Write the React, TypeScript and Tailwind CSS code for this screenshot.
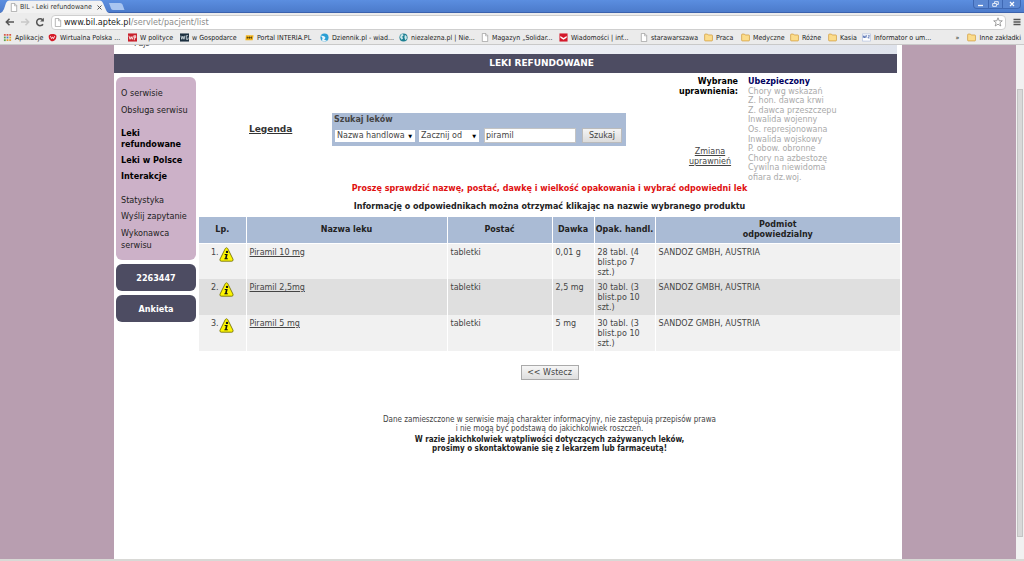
import React, { useState } from 'react'

const bookmarks = [
  { label: "Aplikacje", icon: "apps", width: "w-[45px]" },
  { label: "Wirtualna Polska ...", icon: "wp", width: "w-[80px]" },
  { label: "W polityce", icon: "polityce", width: "w-[52px]" },
  { label: "w Gospodarce", icon: "gospodarce", width: "w-[65px]" },
  { label: "Portal INTERIA.PL", icon: "interia", width: "w-[75px]" },
  { label: "Dziennik.pl - wiad...", icon: "dziennik", width: "w-[79px]" },
  { label: "niezalezna.pl | Nie...", icon: "globe", width: "w-[82px]" },
  { label: "Magazyn „Solidar...", icon: "page", width: "w-[78px]" },
  { label: "Wiadomości | inf...", icon: "mail", width: "w-[81px]" },
  { label: "starawarszawa", icon: "page", width: "w-[64px]" },
  { label: "Praca", icon: "folder", width: "w-[37px]" },
  { label: "Medyczne", icon: "folder", width: "w-[49px]" },
  { label: "Różne", icon: "folder", width: "w-[38px]" },
  { label: "Kasia", icon: "folder", width: "w-[34px]" },
  { label: "Informator o um...", icon: "nfz", width: "w-[72px]" },
]

const rights = [
  "Chory wg wskazań",
  "Z. hon. dawca krwi",
  "Z. dawca przeszczepu",
  "Inwalida wojenny",
  "Os. represjonowana",
  "Inwalida wojskowy",
  "P. obow. obronne",
  "Chory na azbestozę",
  "Cywilna niewidoma",
  "ofiara dz.woj.",
]

const drugs = [
  { name: "Piramil 10 mg", form: "tabletki", dose: "0,01 g", pack: "28 tabl. (4 blist.po 7 szt.)", company: "SANDOZ GMBH, AUSTRIA" },
  { name: "Piramil 2,5mg", form: "tabletki", dose: "2,5 mg", pack: "30 tabl. (3 blist.po 10 szt.)", company: "SANDOZ GMBH, AUSTRIA" },
  { name: "Piramil 5 mg", form: "tabletki", dose: "5 mg", pack: "30 tabl. (3 blist.po 10 szt.)", company: "SANDOZ GMBH, AUSTRIA" },
]

function PageIcon() {
  return (
    <svg viewBox="0 0 8 10" className="h-[9px] w-2 shrink-0">
      <path d="M1 .5h3.8L7 2.8v6.7H1z" fill="#fff" stroke="#9a9a9a" strokeWidth=".8" />
      <path d="M4.6.6v2.5H7" fill="none" stroke="#9a9a9a" strokeWidth=".7" />
    </svg>
  )
}

function BookmarkIcon({ name }: { name: string }) {
  if (name === "page") return <PageIcon />
  return (
    <svg viewBox="0 0 10 10" className="h-[9px] w-[9px] shrink-0">
      {name === "apps" && (
        <>
          <path d="M1 1h2v2H1zM4 1h2v2H4zM7 1h2v2H7z" fill="#d8574a" />
          <path d="M1 4h2v2H1z" fill="#5a9e4b" />
          <path d="M4 4h2v2H4z" fill="#4a7fd0" />
          <path d="M7 4h2v2H7z" fill="#e0b030" />
          <path d="M1 7h2v2H1z" fill="#5a9e4b" />
          <path d="M4 7h2v2H4zM7 7h2v2H7z" fill="#e0a030" />
        </>
      )}
      {name === "wp" && (
        <>
          <path d="M1 2.5Q2.500 1 5 1.200 8 .5 9.300 2.800 9.800 6 7.500 8 5 10.300 3 8.500 0 6.500 1 2.500z" fill="#d51c29" />
          <path d="M2.600 3.500l1.500 2.800 1-2 1 2 1.300-2.800" fill="none" stroke="#fff" strokeWidth=".9" />
        </>
      )}
      {name === "polityce" && (
        <>
          <path d="M0 .5h10v9H0z" fill="#c9202b" />
          <path d="M1 3l1.300 4L3.500 4l1.200 3L6 3M7 8V3h1.500v2.400H7" fill="none" stroke="#fff" strokeWidth=".9" />
        </>
      )}
      {name === "gospodarce" && (
        <>
          <path d="M0 .5h10v9H0z" fill="#1c3040" />
          <path d="M1 3l1 4 1.200-3.500L4.400 7l1-4M9 3H7v4h2V5" fill="none" stroke="#dfe9ee" strokeWidth=".9" />
        </>
      )}
      {name === "interia" && (
        <>
          <path d="M1 2.500h8.500L8.500 8H.5z" fill="#f3b51b" />
          <path d="M2 5.200h5.500M2.500 4v2.300M5 4v2.300M7.300 4v2.300" stroke="#3b3010" strokeWidth=".8" />
        </>
      )}
      {name === "dziennik" && (
        <>
          <circle cx="5" cy="5" r="4.500" fill="#2b9fd4" />
          <path d="M1 3Q5 2.500 6 5 6 7 4.500 7 6 9 8.500 7.500 5 11 2 8 4 6 1 3z" fill="#e9f5fb" />
        </>
      )}
      {name === "globe" && (
        <>
          <circle cx="5" cy="5" r="4.500" fill="#1c7f92" />
          <path d="M2 1.800L4.500 1 5 3 3.500 4 4.500 6 3 7.500 1.200 5zM6.500 2l2 1.500.2 3L7 8 6 5z" fill="#cfeaec" />
        </>
      )}
      {name === "mail" && (
        <>
          <path d="M.5.5h9v9h-9z" fill="#d4192b" />
          <path d="M1.500 3.200L5 5.600l3.500-2.400v2L5 7.500 1.500 5.200z" fill="#fff" />
        </>
      )}
      {name === "folder" && (
        <path d="M.7 2q0-.8.8-.8h2.300l.9 1h4q.7 0 .7.8v5q0 .8-.7.800H1.500q-.8 0-.8-.8z" fill="#fbdc8c" stroke="#cf9a3c" strokeWidth=".8" />
      )}
      {name === "nfz" && (
        <>
          <path d="M.5 1h9v8h-9z" fill="#fff" stroke="#9fb0d8" strokeWidth=".6" />
          <path d="M1.500 5.500V3l1.500 2.500V3M4.200 5.500V3h1.300M4.200 4.200h1M6.500 3h2l-2 2.500h2" fill="none" stroke="#2b4c9f" strokeWidth=".7" />
        </>
      )}
    </svg>
  )
}

function WarningIcon() {
  return (
    <svg viewBox="0 0 15 15" className="h-[15px] w-[15px] shrink-0">
      <path d="M6.300 1.500Q7.500 0 8.700 1.500l5.300 10.700q.6 1.800-1.200 2H2.200Q.4 14 1 12.200z" fill="#fdf500" stroke="#77740c" strokeWidth=".9" />
      <circle cx="8" cy="4.900" r="1.200" fill="#111" />
      <path d="M5.800 6.900h2.900L7.700 11.200h1.100v1H5.300l.2-1h.6L6.800 7.900h-1.200z" fill="#111" />
    </svg>
  )
}

function BrowserBar() {
  return (
    <header className="text-[7px] leading-[10px] font-['DejaVu_Sans_Condensed','DejaVu_Sans',sans-serif]">
      <div className="flex h-[13px] justify-between border-b border-[#3c62ad] bg-linear-to-b from-[#5b8ee0] to-[#4c7bcb]">
        <div className="flex">
          <svg viewBox="0 0 126 13" className="h-[13px] w-[126px]">
            <path d="M0 13Q3 12 4 9L6 3Q7 .5 9 .5h91q2 0 3 2.500l3 7q1 3 3 3z" fill="#f2f2f2" />
            <path d="M109 3h11q2 0 2.500 1.500L124.500 10h-11q-2 0-2.500-1.500z" fill="#a9c5f0" />
          </svg>
          <div className="-ml-[116px] flex h-[13px] w-[92px] items-center gap-[2px] pt-[1px]">
            <PageIcon />
            <span className="whitespace-nowrap text-[#333]">BIL - Leki refundowane</span>
            <button aria-label="Zamknij kartę" className="ml-auto">
              <svg viewBox="0 0 5 5" className="h-[5px] w-[5px]"><path d="M.5.5l4 4M4.500.5l-4 4" stroke="#555" /></svg>
            </button>
          </div>
        </div>
        <div className="mr-[3px] flex h-[9px] w-[48px] rounded-b-sm border border-t-0 border-[#3f68b3] bg-[#5c88d2]">
          <button aria-label="Minimalizuj" className="flex-1">
            <svg viewBox="0 0 14 8" className="h-2 w-[14px]"><path d="M4 5.500h5" stroke="#fff" strokeWidth="1.300" /></svg>
          </button>
          <button aria-label="Przywróć" className="flex-1 border-x border-[#3f68b3]">
            <svg viewBox="0 0 14 8" className="h-2 w-[13px]"><path d="M4 3.500h4v3H4zM6 3V1.500h4v3H8.500" fill="none" stroke="#fff" strokeWidth=".9" /></svg>
          </button>
          <button aria-label="Zamknij" className="flex-1">
            <svg viewBox="0 0 18 8" className="h-2 w-[18px]"><path d="M7 2l4 4M11 2L7 6" stroke="#fff" strokeWidth="1.200" /></svg>
          </button>
        </div>
      </div>
      <div className="flex h-[17px] items-center bg-[#ececec] pt-[1px] pr-[3px] pl-[5px]">
        <button aria-label="Wstecz">
          <svg viewBox="0 0 10 10" className="h-[10px] w-[10px]"><path d="M9 5H1.500M4.500 1.800L1.300 5l3.200 3.200" fill="none" stroke="#555" strokeWidth="1.500" /></svg>
        </button>
        <button aria-label="Dalej" className="ml-[5px]">
          <svg viewBox="0 0 10 10" className="h-[10px] w-[10px]"><path d="M1 5h7.500M5.500 1.800L8.700 5 5.500 8.200" fill="none" stroke="#c8c8c8" strokeWidth="1.500" /></svg>
        </button>
        <button aria-label="Odśwież" className="ml-[5px]">
          <svg viewBox="0 0 10 10" className="h-[10px] w-[10px]">
            <path d="M8 7.200A3.500 3.500 0 1 1 7.700 2.700" fill="none" stroke="#555" strokeWidth="1.500" />
            <path d="M8.900.8v3.800H5.100z" fill="#555" />
          </svg>
        </button>
        <div className="ml-[6px] flex h-[15px] flex-1 items-center rounded-sm border border-[#cfcfcf] bg-white px-[2px]">
          <PageIcon />
          <span className="ml-[2px] text-[9px] text-[#222]">www.bil.aptek.pl<span className="text-[#8c8c8c]">/servlet/pacjent/list</span></span>
          <button aria-label="Dodaj do zakładek" className="ml-auto">
            <svg viewBox="0 0 10 10" className="h-[10px] w-[10px]"><path d="M5 .8l1.200 3h3.100L6.900 5.800l.9 3.200L5 7.200 2.200 9l.9-3.200L.7 3.800h3.100z" fill="none" stroke="#8a8a8a" strokeWidth=".8" /></svg>
          </button>
        </div>
        <button aria-label="Menu" className="ml-[7px]">
          <svg viewBox="0 0 8 8" className="h-2 w-2"><path d="M.5 1.500h7M.5 4h7M.5 6.500h7" stroke="#555" strokeWidth="1.300" /></svg>
        </button>
      </div>
      <nav className="flex h-[15px] items-center border-b border-[#c9c9c9] bg-[#ebebeb] px-[3px] pt-[1px] text-[#222]">
        {bookmarks.map((b) => (
          <a key={b.label} href="#" className={`flex shrink-0 items-center gap-[3px] whitespace-nowrap ${b.width}`}>
            <BookmarkIcon name={b.icon} />
            {b.label}
          </a>
        ))}
        <button aria-label="Więcej zakładek" className="ml-auto">»</button>
        <a href="#" className="ml-[8px] flex shrink-0 items-center gap-[3px] whitespace-nowrap">
          <BookmarkIcon name="folder" />
          Inne zakładki
        </a>
      </nav>
    </header>
  )
}

function Sidebar() {
  return (
    <aside className="w-[80px] shrink-0 pt-1 font-['DejaVu_Sans_Condensed','DejaVu_Sans',sans-serif]">
      <nav className="flex h-[183px] flex-col rounded-md bg-[#ccb1c8] pt-[10px] pl-[5px] text-[9px] leading-[12px] text-[#222]">
        <a href="#">O serwisie</a>
        <a href="#" className="mt-[5px]">Obsługa serwisu</a>
        <div className="mt-3 flex flex-col gap-[5px] font-bold leading-[11px] text-black">
          <a href="#">Leki refundowane</a>
          <a href="#">Leki w Polsce</a>
          <a href="#">Interakcje</a>
        </div>
        <a href="#" className="mt-3">Statystyka</a>
        <a href="#" className="mt-1">Wyślij zapytanie</a>
        <a href="#" className="mt-[5px]">Wykonawca serwisu</a>
      </nav>
      <a href="#" className="mt-1 flex h-[27px] items-center justify-center rounded-md bg-[#4d4c62] pt-[2px] text-[9px] font-bold text-white">2263447</a>
      <a href="#" className="mt-1 flex h-[27px] items-center justify-center rounded-md bg-[#4d4c62] pt-[2px] text-[9px] font-bold text-white">Ankieta</a>
    </aside>
  )
}

function SearchForm() {
  const [query, setQuery] = useState("piramil")
  return (
    <form className="h-[33px] w-[294px] bg-[#aabbd5] px-[2px]" onSubmit={(e) => e.preventDefault()}>
      <label htmlFor="query" className="block h-[15px] pt-[2px] text-[8px] font-bold leading-[10px]">Szukaj leków</label>
      <div className="flex items-center text-[8px]">
        <div className="relative ml-[1px] w-[80px]">
          <select aria-label="Rodzaj nazwy" className="h-3 w-full appearance-none bg-white pl-[2px] leading-[12px]">
            <option>Nazwa handlowa</option>
          </select>
          <span className="pointer-events-none absolute top-0 right-[3px] text-[5px] leading-[12px] text-black">▼</span>
        </div>
        <div className="relative ml-[4px] w-[60px]">
          <select aria-label="Sposób szukania" className="h-3 w-full appearance-none bg-white pl-[2px] leading-[12px]">
            <option>Zacznij od</option>
          </select>
          <span className="pointer-events-none absolute top-0 right-[3px] text-[5px] leading-[12px] text-black">▼</span>
        </div>
        <input id="query" value={query} onChange={(e) => setQuery(e.target.value)} className="ml-[5px] h-[15px] w-[92px] border border-[#c4c4c4] bg-white px-[1px]" />
        <button className="ml-[6px] h-[15px] w-[40px] border border-[#bbb] bg-linear-to-b from-[#f4f4f4] to-[#dcdcdc]">Szukaj</button>
      </div>
    </form>
  )
}

function DrugTable() {
  return (
    <table className="w-full table-fixed border-collapse text-left text-[8px] leading-[10px]">
      <colgroup>
        <col className="w-[47px]" />
        <col className="w-[201px]" />
        <col className="w-[105px]" />
        <col className="w-[42px]" />
        <col className="w-[61px]" />
        <col />
      </colgroup>
      <thead>
        <tr className="h-[26px] border-b border-white bg-[#aabbd5] text-center text-[#222]">
          <th>Lp.</th>
          <th className="border-l border-white">Nazwa leku</th>
          <th className="border-l border-white">Postać</th>
          <th className="border-l border-white">Dawka</th>
          <th className="border-l border-white whitespace-nowrap">Opak. handl.</th>
          <th className="border-l border-white">Podmiot<br />odpowiedzialny</th>
        </tr>
      </thead>
      <tbody>
        {drugs.map((drug, i) => (
          <tr key={drug.name} className="h-9 align-top odd:bg-[#f1f1f1] even:bg-[#dfdfdf]">
            <td className="pt-[3px]">
              <div className="flex pl-3">
                <span className="pt-[1px]">{i + 1}.</span>
                <WarningIcon />
              </div>
            </td>
            <td className="border-l border-white pt-1 pl-[3px]"><a href="#" className="underline">{drug.name}</a></td>
            <td className="border-l border-white pt-1 pl-[3px]">{drug.form}</td>
            <td className="border-l border-white pt-1 pl-[3px]">{drug.dose}</td>
            <td className="border-l border-white pt-1 pr-[6px] pl-[3px]">{drug.pack}</td>
            <td className="border-l border-white pt-1 pl-[3px]">{drug.company}</td>
          </tr>
        ))}
      </tbody>
    </table>
  )
}

export default function App() {
  return (
    <div className="flex min-h-screen flex-col">
      <BrowserBar />
      <div className="flex flex-1 border-b-2 border-[#d9d9d6] bg-[#b89eb0] font-['DejaVu_Sans',sans-serif] text-[#444]">
        <div className="flex flex-1">
          <main className="mx-auto w-full max-w-[788px] bg-white">
            <div className="mr-[5px] h-[9px] overflow-hidden bg-linear-to-r from-white to-[#dfe3ec] pl-5 text-[8px] leading-[10px]">
              <div className="-mt-[6px]">Pajs</div>
            </div>
            <h1 className="mr-[5px] flex h-[19px] items-center justify-center bg-[#4d4c62] pt-[1px] pl-[72px] text-[9px] font-bold text-white">LEKI REFUNDOWANE</h1>
            <div className="flex gap-[3px] px-[2px]">
              <Sidebar />
              <section className="flex-1">
                <div className="flex h-[110px]">
                  <a href="#" className="mt-[50px] ml-[50px] w-[83px] text-[9px] font-bold leading-[12px] text-[#333] underline">Legenda</a>
                  <div className="mt-[40px]"><SearchForm /></div>
                  <div className="ml-auto flex w-[84px] flex-col pt-1 text-right text-[8px] leading-[10px]">
                    <p className="font-bold text-black">Wybrane uprawnienia:</p>
                    <a href="#" className="mt-[50px] ml-[28px] text-center text-[#444] underline">Zmiana uprawnień</a>
                  </div>
                  <ul className="ml-[10px] flex h-[109px] w-[152px] flex-col justify-between pt-1 text-[8px] leading-[9px] text-[#aaa]">
                    <li className="font-bold text-[#00005f]">Ubezpieczony</li>
                    {rights.map((r) => <li key={r}>{r}</li>)}
                  </ul>
                </div>
                <p className="text-center text-[8px] font-bold leading-[12px] text-[#e01010]">Proszę sprawdzić nazwę, postać, dawkę i wielkość opakowania i wybrać odpowiedni lek</p>
                <p className="mt-[6px] mb-1 text-center text-[8px] font-bold leading-[12px] text-[#222]">Informację o odpowiednikach można otrzymać klikając na nazwie wybranego produktu</p>
                <DrugTable />
                <div className="mt-[14px] text-center">
                  <button className="h-[15px] w-[58px] border border-[#aaa] bg-linear-to-b from-[#f6f6f6] to-[#dedede] align-top text-[8px]">&lt;&lt; Wstecz</button>
                </div>
                <footer className="mt-[26px] text-center font-['DejaVu_Sans_Condensed','DejaVu_Sans',sans-serif] text-[8px] leading-[9px]">
                  <p>Dane zamieszczone w serwisie mają charakter informacyjny, nie zastępują przepisów prawa<br />i nie mogą być podstawą do jakichkolwiek roszczeń.</p>
                  <p className="mt-[2px] font-bold text-[#222]">W razie jakichkolwiek wątpliwości dotyczących zażywanych leków,<br />prosimy o skontaktowanie się z lekarzem lub farmaceutą!</p>
                </footer>
              </section>
            </div>
          </main>
        </div>
        <div className="flex w-2 flex-col bg-[#f1f1f1] px-[1px] pt-[44px]">
          <div className="mb-[22px] flex-1 border border-[#c4c4c4] bg-[#d8d8d8]" />
        </div>
      </div>
    </div>
  )
}
